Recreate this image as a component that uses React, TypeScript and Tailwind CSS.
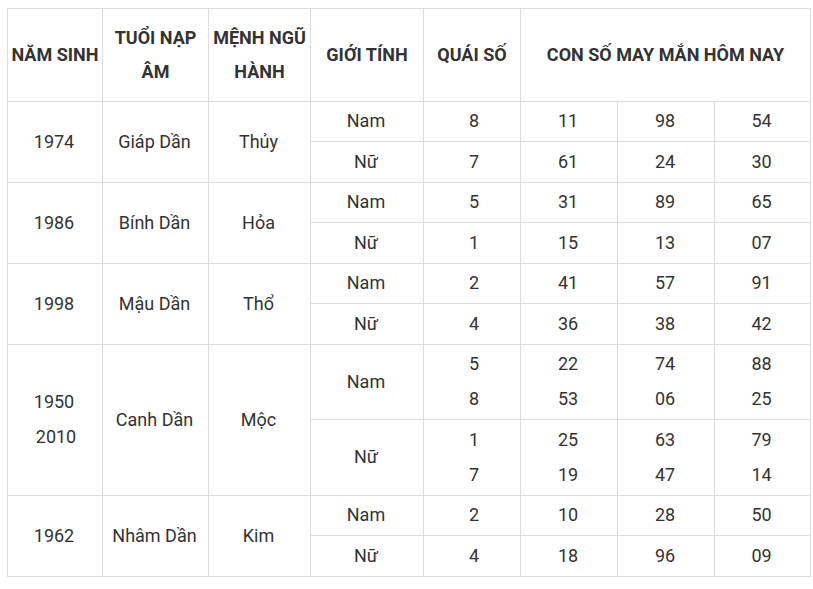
import React from "react";

type Row = {
  year: string[];
  napAm: string;
  menh: string;
  groups: { gender: string; qs: string[]; nums: string[][] }[];
  tall?: boolean;
};

const rows: Row[] = [
  { year: ["1974"], napAm: "Giáp Dần", menh: "Thủy", groups: [
    { gender: "Nam", qs: ["8"], nums: [["11", "98", "54"]] },
    { gender: "Nữ", qs: ["7"], nums: [["61", "24", "30"]] },
  ] },
  { year: ["1986"], napAm: "Bính Dần", menh: "Hỏa", groups: [
    { gender: "Nam", qs: ["5"], nums: [["31", "89", "65"]] },
    { gender: "Nữ", qs: ["1"], nums: [["15", "13", "07"]] },
  ] },
  { year: ["1998"], napAm: "Mậu Dần", menh: "Thổ", groups: [
    { gender: "Nam", qs: ["2"], nums: [["41", "57", "91"]] },
    { gender: "Nữ", qs: ["4"], nums: [["36", "38", "42"]] },
  ] },
  { year: ["1950", "2010"], napAm: "Canh Dần", menh: "Mộc", tall: true, groups: [
    { gender: "Nam", qs: ["5", "8"], nums: [["22", "74", "88"], ["53", "06", "25"]] },
    { gender: "Nữ", qs: ["1", "7"], nums: [["25", "63", "79"], ["19", "47", "14"]] },
  ] },
  { year: ["1962"], napAm: "Nhâm Dần", menh: "Kim", groups: [
    { gender: "Nam", qs: ["2"], nums: [["10", "28", "50"]] },
    { gender: "Nữ", qs: ["4"], nums: [["18", "96", "09"]] },
  ] },
];

const td = "border border-[#dddddd] text-center align-middle pl-1 pr-[6px] pt-0 pb-[2px] leading-[35px]";
const tdQ = "border border-[#dddddd] text-center align-middle pl-[8px] pr-1 pt-0 pb-[2px] leading-[35px]";
const th = "border border-[#dddddd] text-center align-middle px-0 py-0 font-bold leading-[34px] whitespace-nowrap";

function Lines({ items }: { items: string[] }) {
  return (
    <>
      {items.map((s, i) => (
        <div key={i} className={i === 1 && items[0] === "1950" ? "pl-[4px]" : ""}>{s}</div>
      ))}
    </>
  );
}

export default function App() {
  return (
    <div className="bg-white w-[813px] h-[589px] pt-[8px] pl-[7px]" style={{ fontFamily: "Roboto, 'Liberation Sans', sans-serif" }}>
      <table className="table-fixed border-collapse w-[803px] text-[18px] text-[#333333]">
        <colgroup>
          <col className="w-[95px]" />
          <col className="w-[106px]" />
          <col className="w-[102px]" />
          <col className="w-[113px]" />
          <col className="w-[97px]" />
          <col className="w-[97px]" />
          <col className="w-[97px]" />
          <col className="w-[96px]" />
        </colgroup>
        <thead>
          <tr className="h-[93px]">
            <th className={th + " align-top pt-[29px]"}>NĂM SINH</th>
            <th className={th}>TUỔI NẠP<br />ÂM</th>
            <th className={th}>MỆNH NGŨ<br />HÀNH</th>
            <th className={th + " align-top pt-[29px]"}>GIỚI TÍNH</th>
            <th className={th + " align-top pt-[29px]"}>QUÁI SỐ</th>
            <th className={th + " align-top pt-[29px]"} colSpan={3}>CON SỐ MAY MẮN HÔM NAY</th>
          </tr>
        </thead>
        <tbody>
          {rows.map((r, ri) =>
            r.groups.map((g, gi) => (
              <tr key={ri + "-" + gi} className={r.tall ? (gi === 0 ? "h-[75px]" : "h-[76px]") : (gi === 0 ? "h-[40px]" : "h-[41px]")}>
                {gi === 0 && (
                  <>
                    <td className={td} rowSpan={2}><Lines items={r.year} /></td>
                    <td className={td} rowSpan={2}>{r.napAm}</td>
                    <td className={td} rowSpan={2}>{r.menh}</td>
                  </>
                )}
                <td className={td}>{g.gender}</td>
                <td className={tdQ}><Lines items={g.qs} /></td>
                {[0, 1, 2].map((c) => (
                  <td key={c} className={td}><Lines items={g.nums.map((n) => n[c])} /></td>
                ))}
              </tr>
            ))
          )}
        </tbody>
      </table>
    </div>
  );
}
